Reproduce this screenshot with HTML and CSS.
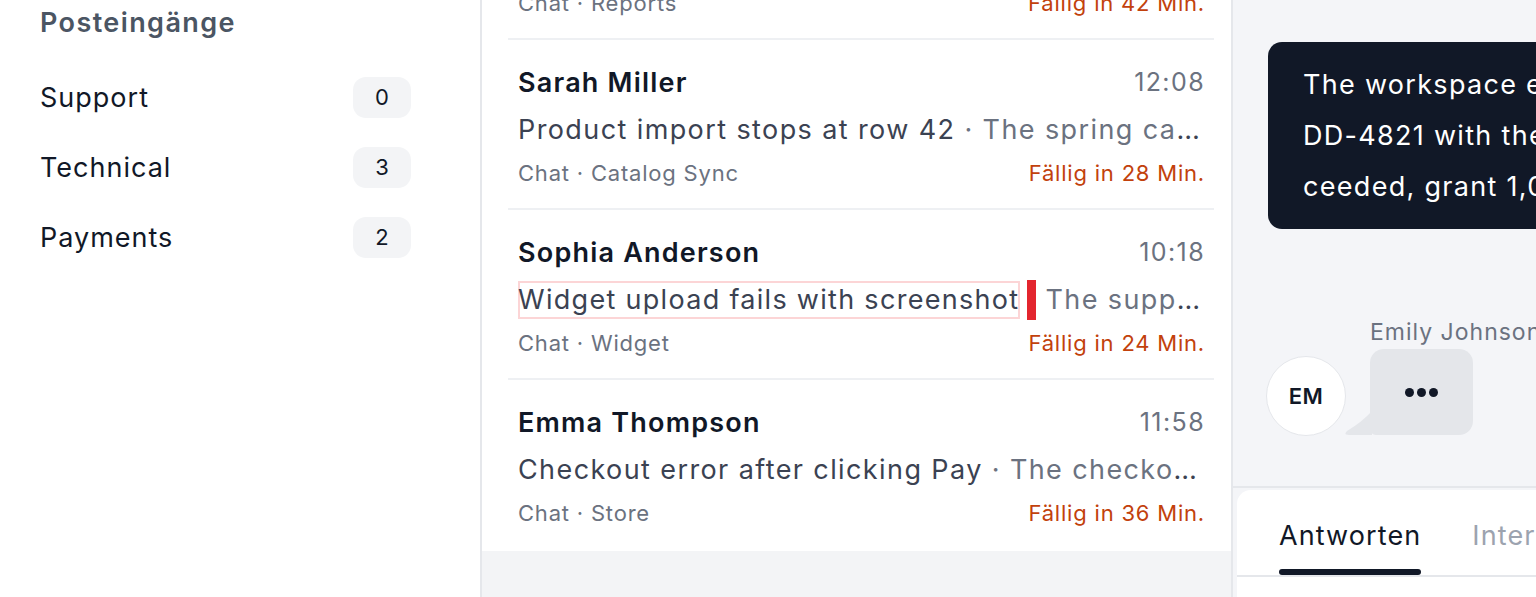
FILE: index.html
```html
<!DOCTYPE html>
<html lang="de">
<head>
    <meta charset="UTF-8">
    <meta name="viewport" content="width=device-width, initial-scale=1.0">
    <title>Support Inbox</title>
    <link rel="stylesheet" href="styles.css">
</head>
<body>
    <div class="app">
        <aside class="sidebar">
            <h2 class="side-title">Posteingänge</h2>
            <ul class="inbox-list">
                <li class="inbox-item"><span>Support</span><span class="count">0</span></li>
                <li class="inbox-item"><span>Technical</span><span class="count">3</span></li>
                <li class="inbox-item"><span>Payments</span><span class="count">2</span></li>
            </ul>
        </aside>

        <section class="conversations">
            <ul class="conv-list">
                <li class="conv">
                    <div class="conv-top"><span class="conv-name">Olivia Brown</span><span class="conv-time">12:31</span></div>
                    <div class="conv-subject"><span class="subject">Monthly report is empty</span><span class="preview"> · The export for March shows no rows</span></div>
                    <div class="conv-meta"><span>Chat · Reports</span><span class="due">Fällig in 42 Min.</span></div>
                </li>
                <li class="conv">
                    <div class="conv-top"><span class="conv-name">Sarah Miller</span><span class="conv-time">12:08</span></div>
                    <div class="conv-subject"><span class="subject">Product import stops at row 42</span><span class="preview"> · The spring catalog import aborts every time</span></div>
                    <div class="conv-meta"><span>Chat · Catalog Sync</span><span class="due">Fällig in 28 Min.</span></div>
                </li>
                <li class="conv">
                    <div class="conv-top"><span class="conv-name">Sophia Anderson</span><span class="conv-time">10:18</span></div>
                    <div class="conv-subject"><span class="subject flagged">Widget upload fails with screenshot</span><span class="marker"></span><span class="preview">The support widget rejects PNG files</span></div>
                    <div class="conv-meta"><span>Chat · Widget</span><span class="due">Fällig in 24 Min.</span></div>
                </li>
                <li class="conv">
                    <div class="conv-top"><span class="conv-name">Emma Thompson</span><span class="conv-time">11:58</span></div>
                    <div class="conv-subject"><span class="subject">Checkout error after clicking Pay</span><span class="preview"> · The checkout page shows an error 500</span></div>
                    <div class="conv-meta"><span>Chat · Store</span><span class="due">Fällig in 36 Min.</span></div>
                </li>
            </ul>
        </section>

        <section class="thread">
            <div class="messages">
                <div class="bubble-dark">
                    <p>The workspace export for the account</p>
                    <p>DD-4821 with the storage quota ex-</p>
                    <p>ceeded, grant 1,000 credits.</p>
                </div>
                <div class="typing-row">
                    <div class="avatar">EM</div>
                    <div class="typing-col">
                        <div class="typing-name">Emily Johnson</div>
                        <div class="typing-bubble">
                            <svg class="tail" width="28" height="24" viewBox="0 0 28 24">
                                <path d="M28 0 L28 24 L5 24 Q-1 24 3 20 Q18 11 28 0 Z" fill="#e4e6ea"/>
                            </svg>
                            <span class="dot"></span><span class="dot"></span><span class="dot"></span>
                        </div>
                    </div>
                </div>
            </div>
            <div class="composer">
                <div class="composer-card">
                    <div class="tabs">
                        <span class="tab active">Antworten</span>
                        <span class="tab">Interne Notiz</span>
                    </div>
                </div>
            </div>
        </section>
    </div>
</body>
</html>
```

FILE: styles.css
```css
body {
    margin: 0;
    font-family: 'Inter', 'Noto Sans', sans-serif;
    background: #fff;
    height: 597px;
    overflow: hidden;
}
.app {
    display: flex;
    height: 597px;
}

/* sidebar */
.sidebar {
    width: 482px;
    flex: none;
    box-sizing: border-box;
    border-right: 2px solid #e5e7eb;
    padding: 4px 69px 0 40px;
}
.side-title {
    margin: 0;
    font-size: 27px;
    line-height: 38px;
    font-weight: 600;
    letter-spacing: 1.4px;
    color: #4b5563;
}
.inbox-list {
    list-style: none;
    margin: 20px 0 0;
    padding: 0;
}
.inbox-item {
    display: flex;
    justify-content: space-between;
    align-items: center;
    height: 70px;
    font-size: 27px;
    letter-spacing: 1px;
    color: #111827;
}
.count {
    width: 58px;
    height: 41px;
    line-height: 41px;
    text-align: center;
    border-radius: 13px;
    background: #f3f4f6;
    font-size: 22px;
    letter-spacing: 0;
}

/* conversation list */
.conversations {
    width: 751px;
    flex: none;
    box-sizing: border-box;
    border-right: 2px solid #e5e7eb;
    background: #f3f4f6;
    overflow: hidden;
}
.conv-list {
    list-style: none;
    margin: -130px 0 0; /* scrolled list */
    padding: 0 17px 3px 26px;
    background: #fff;
}
.conv {
    padding: 25px 9px 20px 10px;
    border-bottom: 2px solid #eef0f3;
}
.conv:last-child {
    border-bottom: none;
}
.conv-top {
    display: flex;
    justify-content: space-between;
    align-items: center;
    height: 34px;
}
.conv-name {
    font-size: 27px;
    font-weight: 600;
    letter-spacing: 1.2px;
    color: #111827;
}
.conv-time {
    font-size: 25px;
    letter-spacing: 1.4px;
    color: #6b7280;
}
.conv-subject {
    margin-top: 11px;
    height: 40px;
    line-height: 40px;
    font-size: 27px;
    letter-spacing: 1.4px;
    color: #3b4252;
    white-space: nowrap;
    overflow: hidden;
    text-overflow: ellipsis;
}
.preview {
    color: #6b7280;
}
.flagged {
    display: inline-block;
    line-height: 38px;
    letter-spacing: 1.3px;
    padding: 0 1px 0 0;
    box-shadow: inset 0 0 0 2px #fcd5d6;
}
.marker {
    display: inline-block;
    width: 9px;
    height: 42px;
    margin: 0 9px 0 7px;
    background: #e3262f;
    vertical-align: top;
}
.conv-meta {
    margin-top: 8px;
    display: flex;
    justify-content: space-between;
    line-height: 30px;
    font-size: 22px;
    letter-spacing: 0.8px;
    color: #6b7280;
}
.due {
    color: #c2410c;
}

/* thread */
.thread {
    flex: 1;
    min-width: 0;
    display: flex;
    flex-direction: column;
    background: #f4f5f8;
    overflow: hidden;
}
.messages {
    flex: 1;
    padding: 42px 0 0 33px;
}
.bubble-dark {
    width: 700px;
    margin-left: 2px;
    padding: 17px 35px;
    border-radius: 14px;
    background: #111827;
    color: #fff;
    font-size: 27px;
    line-height: 51px;
    letter-spacing: 1.3px;
    white-space: nowrap;
}
.bubble-dark p {
    margin: 0;
}
.typing-row {
    display: flex;
    align-items: flex-end;
    gap: 24px;
    margin-top: 89px;
}
.avatar {
    flex: none;
    width: 78px;
    height: 78px;
    border-radius: 50%;
    background: #fff;
    border: 1px solid #e5e7eb;
    display: flex;
    align-items: center;
    justify-content: center;
    font-size: 22px;
    font-weight: 600;
    letter-spacing: 0.5px;
    color: #111827;
    margin-bottom: -1px;
}
.typing-col {
    flex: none;
}
.typing-name {
    font-size: 23px;
    line-height: 28px;
    letter-spacing: 1px;
    color: #6b7280;
    white-space: nowrap;
}
.typing-bubble {
    position: relative;
    margin-top: 3px;
    width: 103px;
    height: 86px;
    border-radius: 14px 14px 14px 6px;
    background: #e4e6ea;
    display: flex;
    align-items: center;
    justify-content: center;
    gap: 3px;
}
.tail {
    position: absolute;
    left: -26px;
    bottom: 0;
}
.dot {
    width: 9px;
    height: 9px;
    border-radius: 50%;
    background: #111827;
}

/* composer */
.composer {
    flex: none;
    height: 111px;
    box-sizing: border-box;
    border-top: 2px solid #e5e7eb;
    padding: 2px 0 0 4px;
}
.composer-card {
    height: 100%;
    background: #fff;
    border-top-left-radius: 14px;
}
.tabs {
    display: flex;
    gap: 51px;
    padding-left: 42px;
    border-bottom: 2px solid #e5e7eb;
    white-space: nowrap;
}
.tab {
    padding-top: 29px;
    font-size: 27px;
    line-height: 34px;
    letter-spacing: 1.1px;
    color: #9ca3af;
}
.tab.active {
    color: #111827;
}
.tab::after {
    content: "";
    display: block;
    height: 6px;
    margin-top: 16px;
    border-radius: 3px;
}
.tab.active::after {
    background: #111827;
}
```
